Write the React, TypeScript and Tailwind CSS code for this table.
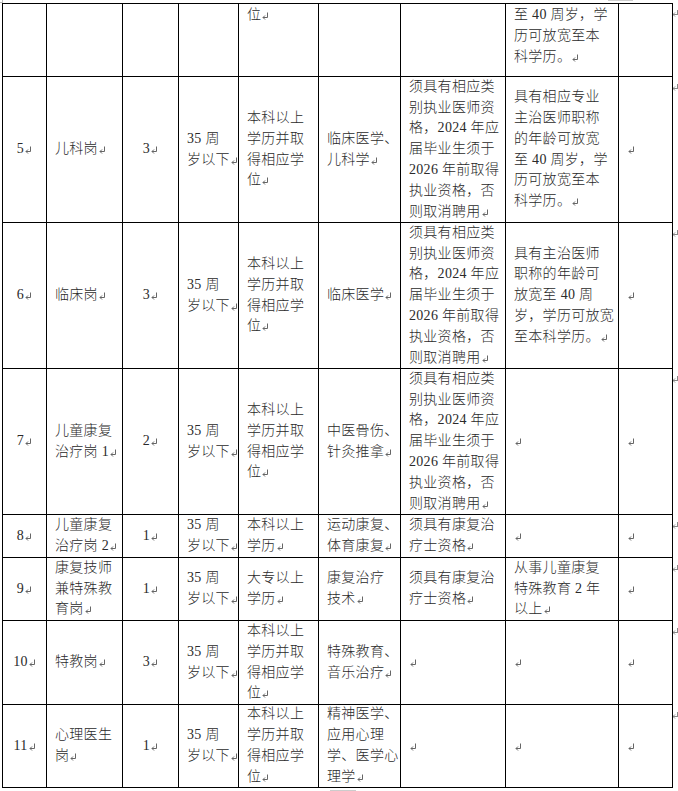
import React from "react";

type C = { l?: string[]; top?: boolean };

const Mark = () => (
  <svg
    width="7"
    height="8"
    viewBox="0 0 7 8"
    className="inline-block align-baseline ml-[1px]"
    style={{ verticalAlign: "-1px" }}
  >
    <path d="M5.5 0.5 V5.5 H1" stroke="#666" strokeWidth="1" fill="none" />
    <path d="M3 3.5 L1 5.5 L3 7.5" stroke="#666" strokeWidth="1" fill="none" />
  </svg>
);

const RowEnd = () => (
  <svg width="6" height="8" viewBox="0 0 6 8" className="block">
    <path d="M0 5.5 H6" stroke="#888" strokeWidth="1" fill="none" />
    <path d="M4.5 1 V5" stroke="#888" strokeWidth="1" fill="none" />
    <path d="M2 3.5 L0 5.5 L2 7.5" stroke="#888" strokeWidth="1" fill="none" />
  </svg>
);

const ZH = ["须具有相应类", "别执业医师资", "格，2024 年应", "届毕业生须于", "2026 年前取得", "执业资格，否", "则取消聘用"];
const BK = ["本科以上", "学历并取", "得相应学", "位"];
const AGE = ["35 周", "岁以下"];

const rows: C[][] = [
  [{}, {}, {}, {}, { l: ["位"], top: true }, {}, {}, { l: ["至 40 周岁，学", "历可放宽至本", "科学历。"], top: true }, {}],
  [
    { l: ["5"] },
    { l: ["儿科岗"] },
    { l: ["3"] },
    { l: AGE },
    { l: BK },
    { l: ["临床医学、", "儿科学"] },
    { l: ZH },
    { l: ["具有相应专业", "主治医师职称", "的年龄可放宽", "至 40 周岁，学", "历可放宽至本", "科学历。"] },
    { l: [""] },
  ],
  [
    { l: ["6"] },
    { l: ["临床岗"] },
    { l: ["3"] },
    { l: AGE },
    { l: BK },
    { l: ["临床医学"] },
    { l: ZH },
    { l: ["具有主治医师", "职称的年龄可", "放宽至 40 周", "岁，学历可放宽", "至本科学历。"] },
    { l: [""] },
  ],
  [
    { l: ["7"] },
    { l: ["儿童康复", "治疗岗 1"] },
    { l: ["2"] },
    { l: AGE },
    { l: BK },
    { l: ["中医骨伤、", "针灸推拿"] },
    { l: ZH },
    { l: [""] },
    { l: [""] },
  ],
  [
    { l: ["8"] },
    { l: ["儿童康复", "治疗岗 2"] },
    { l: ["1"] },
    { l: AGE },
    { l: ["本科以上", "学历"] },
    { l: ["运动康复、", "体育康复"] },
    { l: ["须具有康复治", "疗士资格"] },
    { l: [""] },
    { l: [""] },
  ],
  [
    { l: ["9"] },
    { l: ["康复技师", "兼特殊教", "育岗"] },
    { l: ["1"] },
    { l: AGE },
    { l: ["大专以上", "学历"] },
    { l: ["康复治疗", "技术"] },
    { l: ["须具有康复治", "疗士资格"] },
    { l: ["从事儿童康复", "特殊教育 2 年", "以上"] },
    { l: [""] },
  ],
  [
    { l: ["10"] },
    { l: ["特教岗"] },
    { l: ["3"] },
    { l: AGE },
    { l: BK },
    { l: ["特殊教育、", "音乐治疗"] },
    { l: [""] },
    { l: [""] },
    { l: [""] },
  ],
  [
    { l: ["11"] },
    { l: ["心理医生", "岗"] },
    { l: ["1"] },
    { l: AGE },
    { l: BK },
    { l: ["精神医学、", "应用心理", "学、医学心", "理学"] },
    { l: [""] },
    { l: [""] },
    { l: [""] },
  ],
];

export default function App() {
  return (
    <div
      className="relative w-[678px] h-[791px] bg-white overflow-hidden pl-[2px] pt-[3px] text-[14px] leading-[20.8px] tracking-[0.3px] font-light text-[#2a2a2a]"
      style={{ fontFamily: '"Liberation Serif", "Noto Sans CJK SC", serif' }}
    >
      <div className="absolute left-0 top-0 w-[3px] h-[3px] border-r border-b border-[#bbb]" />
      <div className="absolute left-[608px] top-0 w-[25px] h-[1px] bg-[#ccc]" />
      <div className="absolute left-[330px] top-[790px] w-[26px] h-[1px] bg-[#ccc]" />

      <div className="grid grid-cols-[45px_76px_56px_60px_80px_82px_105px_113px_54px_6px] grid-rows-[74px_146px_146px_146px_43px_63px_84px_83px]">
        {rows.map((row, ri) => (
          <React.Fragment key={ri}>
            {row.map((c, ci) => {
              const center = ci === 0 || ci === 2;
              return (
                <div
                  key={ci}
                  className={
                    "border-black border-r border-b flex flex-col overflow-hidden " +
                    (ci === 0 ? "border-l " : "") +
                    (ri === 0 ? "border-t " : "") +
                    (c.top ? "justify-start pt-[1px] " : "justify-center ") +
                    (center ? "items-center" : "items-start pl-[8px]")
                  }
                >
                  {c.l &&
                    c.l.map((t, i) => (
                      <div key={i} className="whitespace-nowrap">
                        {t}
                        {i === c.l!.length - 1 && <Mark />}
                      </div>
                    ))}
                </div>
              );
            })}
            <div className="pt-[6px] pl-0">
              <RowEnd />
            </div>
          </React.Fragment>
        ))}
      </div>
    </div>
  );
}
